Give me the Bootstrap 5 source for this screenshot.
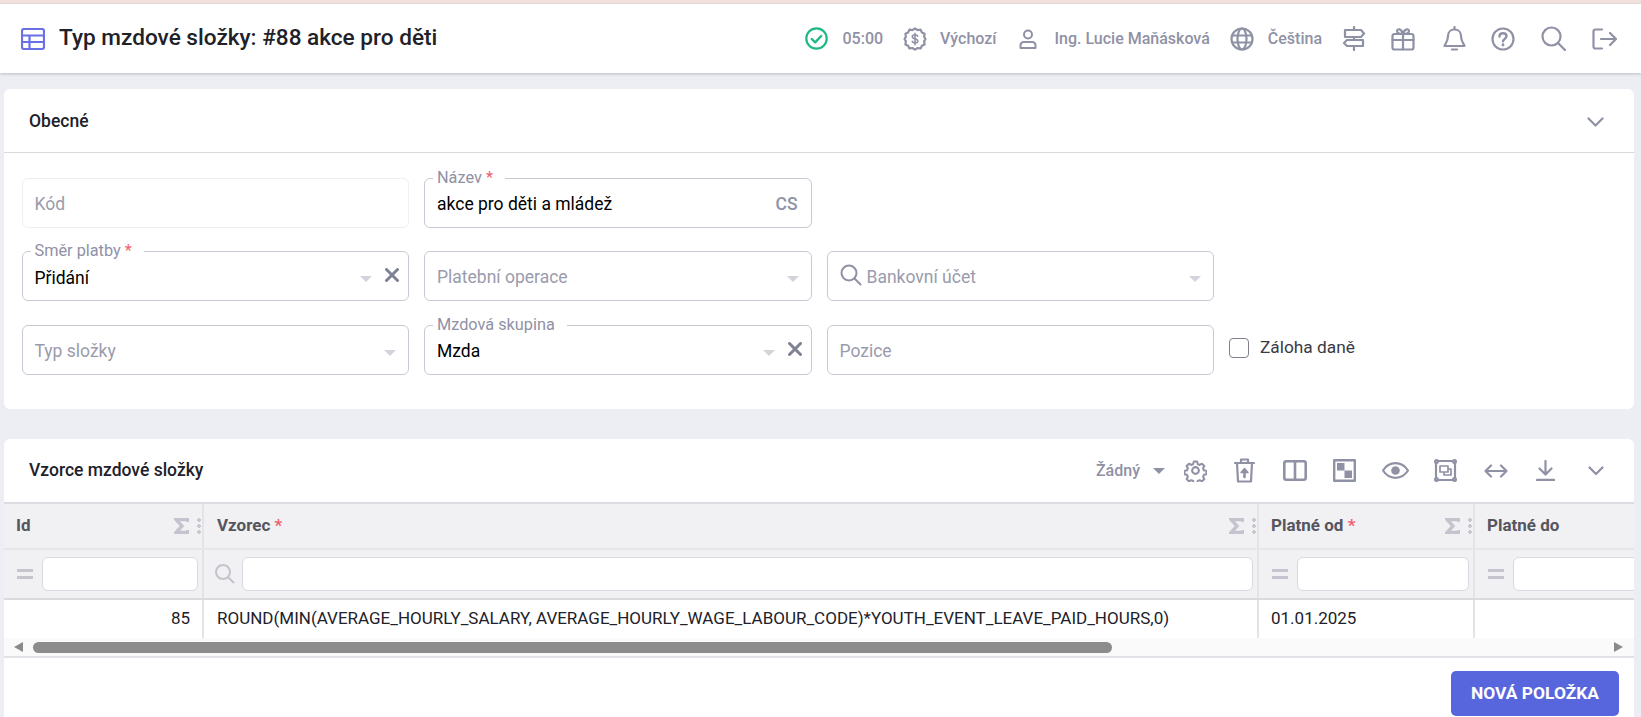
<!DOCTYPE html>
<html lang="cs">
<head>
<meta charset="utf-8">
<title>Typ mzdové složky</title>
<link href="https://cdn.jsdelivr.net/npm/bootstrap@5.3.0/dist/css/bootstrap.min.css" rel="stylesheet">
<style>
html,body{height:717px;overflow:hidden}
body{background:#eceef4;font-family:Roboto,sans-serif;color:#212129;font-size:16px}
.top-strip{height:4px;background:#f3e1df}
.app-bar{height:69px;background:#fff;box-shadow:0 1px 3px rgba(70,70,100,.3);padding:0 24px 0 21px}
.app-title{font-size:22.6px;font-weight:500;margin:0 0 0 14px;color:#212129;line-height:1}
.ic{fill:none;stroke:#8f91a5;stroke-width:2;stroke-linecap:round;stroke-linejoin:round;display:block;flex:none}
.bar-text{font-size:16px;font-weight:500;color:#8f91a5;white-space:nowrap}
.gap-13{margin-left:13px}.gap-14{margin-left:14px}.gap-17{margin-left:17px}.gap-20{margin-left:20px}
.gap-23{margin-left:23px}.gap-25{margin-left:25px}.gap-26{margin-left:26px}
.gap-27{margin-left:27px}.gap-28{margin-left:28px}
.sheet{margin:16px 7px 0 4px;background:#fff;border-radius:6px}
.sheet-one{height:320px}
.sheet-two{margin-top:30px;height:290px;border-radius:6px 6px 0 0;overflow:hidden}
.sheet-head{height:64px;border-bottom:1px solid #d9d9e0;padding:2px 30px 0 25px}
.sheet-two .sheet-head{height:63px;border-bottom:0;padding-top:0}
.sheet-title{font-size:17.5px;font-weight:500;color:#212129}
.fields{--bs-gutter-x:15px;--bs-gutter-y:23.5px;margin:1px 10px 0 10px}
.field{height:50px}
.field-input{height:100%;border:1px solid #c9c9d4;border-radius:6px;font-size:17.5px;color:#000;padding:3px 12px 0;box-shadow:none!important}
.field-input.plain{padding-top:2px}
.field-input::placeholder{color:#9a9bac}
.field-input.soft{border-color:#efeff3}
.field-input.with-search{padding-left:39px}
.float-label{position:absolute;left:9px;top:-9px;background:#fff;padding:0 12px 0 4px;font-size:16.3px;line-height:18px;color:#8f91a5}
.req{color:#f0606e}
.drop-caret{position:absolute;top:25px;width:0;height:0;border-left:6px solid transparent;border-right:6px solid transparent;border-top:6px solid #d3d3dc}
.caret-far{right:37px}
.caret-near{right:13px}
.clear-x{position:absolute;right:10px;top:17px;stroke:#7f8194;stroke-width:3}
.lang-tag{position:absolute;right:14px;top:16px;font-size:17.5px;line-height:20px;font-weight:500;color:#8f91a5}
.lead-search{position:absolute;left:13px;top:13px}
.tax-wrap{height:50px;padding:0 0 3px 0}
.tax-check{width:20px;height:20px;margin:0 11px 0 0!important;float:none!important;border:1.5px solid #80808c;border-radius:3px;flex:none}
.tax-label{font-size:17.3px;color:#3a3a44}
.grid-wrap{overflow:hidden;height:136px;border-top:2px solid #dcdce2}
.grid-table{table-layout:fixed;width:1690px;margin:0;--bs-table-border-color:#e3e3e8}
.grid-table th,.grid-table td{border-right:2px solid #e3e3e8;border-bottom:0;padding:0;vertical-align:middle}
.head-row th{height:45px;background:#f1f1f4;font-size:17px;font-weight:700;color:#55555f;padding:0 1px 0 12px;border-bottom:2px solid #e6e6ea}
.filter-row th{height:50px;background:#f1f1f4;padding:0 4px 0 13px;border-bottom:2px solid #d9d9de}
.data-row td{height:39px;font-size:17px;color:#212129;padding:0 12px;white-space:nowrap}
.grid-table .head-row .wide-col,.grid-table .data-row .wide-col{padding-left:13px}
.filter-box{height:34px;border:1px solid #d9d9e0;border-radius:6px;background:#fff;flex:1;min-width:0}
.gr{fill:none;stroke:#c3c4ce;stroke-width:3;flex:none}
.sum-mark{stroke-width:3.4}
.filter-lead{gap:9px}
.filter-search{gap:7px;margin-left:-2px}
.search-mark{stroke-width:2}
.kebab{width:4px;height:18px;margin-left:8px;flex:none;background:radial-gradient(circle,#c8c8d0 1.8px,transparent 2px) 0 0/4px 6px repeat-y}
.scroll-track{height:20px;background:#fafafa;border-bottom:2px solid #e1e1e6;padding:0 11px 0 10px}
.arrow-l{width:0;height:0;border-top:5.5px solid transparent;border-bottom:5.5px solid transparent;border-right:9px solid #8a8a8a}
.arrow-r{width:0;height:0;border-top:5.5px solid transparent;border-bottom:5.5px solid transparent;border-left:9px solid #8a8a8a}
.thumb{width:1079px;height:11px;background:#8c8c8c;border-radius:6px;margin-left:10px}
.foot{padding:13px 15px 0 0}
.new-btn{background:#5866dd;border:0;border-radius:5px;width:168px;height:45px;color:#fff;font-size:17.4px;font-weight:700;padding:0}
.none-pick{font-size:16px;font-weight:500;color:#8f91a5}
.none-caret{width:0;height:0;border-left:6px solid transparent;border-right:6px solid transparent;border-top:6px solid #8f91a5;margin:0 19px 0 13px}
.head-chevron{margin-left:33px}
</style>
</head>
<body>
<div class="top-strip"></div>
<header class="app-bar d-flex align-items-center">
  <svg class="ic" style="stroke:#6a70e6" width="24" height="22" viewBox="0 0 24 22"><rect x="1" y="1" width="22" height="20" rx="2" stroke-width="2.200"/><path d="M1 7.500h22M1 14h22M8.500 7.500V21" stroke-width="2.200"/></svg>
  <h1 class="app-title">Typ mzdové složky: #88 akce pro děti</h1>
  <div class="d-flex align-items-center ms-auto">
    <svg class="ic" style="stroke:#1fb985" width="23" height="23" viewBox="0 0 23 23"><circle cx="11.500" cy="11.500" r="10.200" stroke-width="2.200"/><path d="M6.800 12l3.400 3.300 6-6.300" stroke-width="2.400"/></svg>
    <span class="bar-text gap-14">05:00</span>
    <svg class="ic gap-20" width="24" height="24" viewBox="0 0 24 24"><path d="M12 1.500l2.600 1.600 3-.4 1.300 2.700 2.700 1.400-.5 3 1.400 2.200-1.400 2.400.5 3-2.700 1.300-1.300 2.700-3-.4-2.600 1.600-2.600-1.600-3 .4-1.300-2.700-2.700-1.300.5-3L1.500 12l1.400-2.200-.5-3 2.700-1.400 1.300-2.700 3 .4z" stroke-width="2.200"/><path d="M14.700 9.200c-.4-1-1.400-1.500-2.700-1.500-1.500 0-2.700.8-2.700 2 0 2.800 5.500 1.500 5.500 4.300 0 1.200-1.200 2-2.800 2-1.300 0-2.400-.6-2.800-1.600M12 6.200v11.600" stroke-width="1.600"/></svg>
    <span class="bar-text gap-13">Výchozí</span>
    <svg class="ic gap-23" width="18" height="20" viewBox="0 0 18 20"><circle cx="9" cy="5.500" r="4"/><path d="M1.500 19v-2.500c0-2 1.500-3.500 3.500-3.500h8c2 0 3.500 1.500 3.500 3.500V19z"/></svg>
    <span class="bar-text gap-17">Ing. Lucie Maňásková</span>
    <svg class="ic gap-20" width="24" height="24" viewBox="0 0 24 24"><circle cx="12" cy="12" r="10.500" stroke-width="2.200"/><ellipse cx="12" cy="12" rx="4.500" ry="10.500" stroke-width="2.200"/><path d="M2 8.500h20M2 15.500h20" stroke-width="2.200"/></svg>
    <span class="bar-text gap-14">Čeština</span>
    <svg class="ic gap-20" width="24" height="25" viewBox="0 0 24 25"><path d="M12 1v3M12 11v3M12 20v4M3 4h16l3 3.500-3 3.500H3zM21 14H5l-3 3 3 3h16z" stroke-width="2.200"/></svg>
    <svg class="ic gap-25" width="24" height="24" viewBox="0 0 24 24"><rect x="1.500" y="7" width="21" height="15.500" rx="2" stroke-width="2.200"/><path d="M1.500 13h21M12 7v15.500M12 7C9 7 6 6.500 6 4s4.500-3 6 3c1.500-6 6-5.500 6-3s-3 3-6 3z" stroke-width="2.200"/></svg>
    <svg class="ic gap-28" width="23" height="25" viewBox="0 0 23 25"><path d="M11.500 1v2.500M11.500 3.500c-4 0-6.500 3-6.500 6.500 0 6-3.500 8.500-3.500 10h20c0-1.500-3.500-4-3.500-10 0-3.500-2.500-6.500-6.500-6.500zM9 23.500h5" stroke-width="2.200"/></svg>
    <svg class="ic gap-25" width="24" height="24" viewBox="0 0 24 24"><circle cx="12" cy="12" r="10.500" stroke-width="2.200"/><path d="M8.500 9.500c0-2 1.600-3.200 3.500-3.200s3.500 1.200 3.500 3c0 2.500-3.500 2.700-3.500 5" stroke-width="2.400"/><path d="M12 17.700v.3" stroke-width="2.800"/></svg>
    <svg class="ic gap-26" width="25" height="25" viewBox="0 0 25 25"><circle cx="10.500" cy="10.500" r="9" stroke-width="2.200"/><path d="M17 17l7 7" stroke-width="2.200"/></svg>
    <svg class="ic gap-26" width="25" height="22" viewBox="0 0 25 22"><path d="M10 1.500H3.500c-1.200 0-2 .8-2 2v15c0 1.200.8 2 2 2H10M9 11h15M18 5l6 6-6 6" stroke-width="2.200"/></svg>
  </div>
</header>

<section class="sheet sheet-one">
  <div class="sheet-head d-flex align-items-center justify-content-between">
    <span class="sheet-title">Obecné</span>
    <svg class="ic" width="17" height="10" viewBox="0 0 17 10"><path d="M1.500 1.500l7 7 7-7" stroke-width="2.200"/></svg>
  </div>
  <div class="row fields">
    <div class="col-3"><div class="field position-relative"><input class="form-control field-input plain soft" placeholder="Kód"></div></div>
    <div class="col-3"><div class="field position-relative"><input class="form-control field-input" value="akce pro děti a mládež"><span class="float-label">Název <span class="req">*</span></span><span class="lang-tag">CS</span></div></div>
    <div class="col-6"></div>

    <div class="col-3"><div class="field position-relative"><input class="form-control field-input" value="Přidání"><span class="float-label">Směr platby <span class="req">*</span></span><span class="drop-caret caret-far"></span><svg class="ic clear-x" width="14" height="14" viewBox="0 0 14 14"><path d="M1.500 1.500l11 11M12.500 1.500l-11 11"/></svg></div></div>
    <div class="col-3"><div class="field position-relative"><input class="form-control field-input plain" placeholder="Platební operace"><span class="drop-caret caret-near"></span></div></div>
    <div class="col-3"><div class="field position-relative"><input class="form-control field-input plain with-search" placeholder="Bankovní účet"><svg class="ic lead-search" width="22" height="22" viewBox="0 0 22 22"><circle cx="9" cy="9" r="7.500"/><path d="M14.500 14.500l6 6"/></svg><span class="drop-caret caret-near"></span></div></div>
    <div class="col-3"></div>

    <div class="col-3"><div class="field position-relative"><input class="form-control field-input plain" placeholder="Typ složky"><span class="drop-caret caret-near"></span></div></div>
    <div class="col-3"><div class="field position-relative"><input class="form-control field-input" value="Mzda"><span class="float-label">Mzdová skupina</span><span class="drop-caret caret-far"></span><svg class="ic clear-x" width="14" height="14" viewBox="0 0 14 14"><path d="M1.500 1.500l11 11M12.500 1.500l-11 11"/></svg></div></div>
    <div class="col-3"><div class="field position-relative"><input class="form-control field-input plain" placeholder="Pozice"></div></div>
    <div class="col-3"><div class="tax-wrap d-flex align-items-center"><input class="form-check-input tax-check" type="checkbox" id="zaloha"><label class="tax-label" for="zaloha">Záloha daně</label></div></div>
  </div>
</section>

<section class="sheet sheet-two">
  <div class="sheet-head d-flex align-items-center">
    <span class="sheet-title">Vzorce mzdové složky</span>
    <div class="d-flex align-items-center ms-auto">
      <span class="none-pick">Žádný</span><span class="none-caret"></span>
      <svg class="ic" width="23" height="23" viewBox="0 0 24 24"><path d="M10 1.500h4l.7 3 2.300 1 2.700-1.500 2.800 2.800-1.500 2.700 1 2.300 3 .7v4l-3 .7-1 2.300 1.500 2.700-2.800 2.800-2.700-1.500-2.300 1-.7 3h-4l-.7-3-2.300-1-2.700 1.500-2.800-2.800 1.500-2.700-1-2.300-3-.7v-4l3-.7 1-2.300-1.500-2.700 2.800-2.800 2.700 1.500 2.300-1z" transform="translate(1.400 1.400) scale(.88)" stroke-width="2.400"/><circle cx="12" cy="12" r="3.500" stroke-width="2.200"/></svg>
      <svg class="ic gap-27" width="21" height="25" viewBox="0 0 21 25"><path d="M1 5h19M7 5V1.500h7V5M3 5l1 18.500h13L18 5" stroke-width="2.200"/><path d="M10.500 19v-7" stroke-width="2.600"/><path d="M7 14.500l3.500-4 3.500 4z" fill="#8f91a5" stroke-width="1.400"/></svg>
      <svg class="ic gap-28" width="24" height="21" viewBox="0 0 24 21"><rect x="1.300" y="1.300" width="21.400" height="18.400" rx="2" stroke-width="2.600"/><path d="M12 1v19" stroke-width="2.600"/></svg>
      <svg class="ic gap-26" width="23" height="23" viewBox="0 0 23 23"><rect x="1.200" y="1.200" width="20.600" height="20.600" stroke-width="2.400"/><path d="M4 4h7.500v7.500H4zM11.500 11.500H19V19h-7.500z" fill="#8f91a5" stroke="none"/></svg>
      <svg class="ic gap-26" width="27" height="17" viewBox="0 0 27 17"><path d="M1 8.500C4 3.800 8.500 1.200 13.500 1.200s9.500 2.600 12.500 7.300c-3 4.700-7.500 7.300-12.500 7.300S4 13.200 1 8.500z" stroke-width="2.200"/><circle cx="13.500" cy="8.500" r="4.300" fill="#8f91a5" stroke="none"/></svg>
      <svg class="ic gap-25" width="23" height="23" viewBox="0 0 23 23"><path d="M3.500 2h16M21 3.500v16M19.500 21h-16M2 19.500v-16" stroke-width="2.200"/><circle cx="2.500" cy="2.500" r="1.500"/><circle cx="20.500" cy="2.500" r="1.500"/><circle cx="2.500" cy="20.500" r="1.500"/><circle cx="20.500" cy="20.500" r="1.500"/><path d="M6 7h8v6H6zM10 13v3h7v-6h-3" stroke-width="1.700"/></svg>
      <svg class="ic gap-27" width="24" height="14" viewBox="0 0 24 14"><path d="M1.500 7h21M7 1.500L1.500 7 7 12.500M17 1.500L22.500 7 17 12.500" stroke-width="2.200"/></svg>
      <svg class="ic gap-28" width="19" height="21" viewBox="0 0 19 21"><path d="M9.500 1v13M3.500 8.500l6 6 6-6" stroke-width="2.200"/><path d="M1 20h17" stroke-width="2.400"/></svg>
      <svg class="ic head-chevron" width="16" height="10" viewBox="0 0 16 10"><path d="M1.500 1.500L8 8l6.500-6.500" stroke-width="2.200"/></svg>
    </div>
  </div>
  <div class="grid-wrap">
    <table class="table grid-table">
      <colgroup><col style="width:199px"><col style="width:1055px"><col style="width:216px"><col style="width:220px"></colgroup>
      <thead>
        <tr class="head-row">
          <th><div class="d-flex align-items-center justify-content-between"><span>Id</span><span class="d-flex align-items-center"><svg class="gr sum-mark" width="15" height="16" viewBox="0 0 15 16"><path d="M14 4V1.500H2L8 8l-6 6.500h12V12"/></svg><span class="kebab"></span></span></div></th>
          <th class="wide-col"><div class="d-flex align-items-center justify-content-between"><span>Vzorec <span class="req">*</span></span><span class="d-flex align-items-center"><svg class="gr sum-mark" width="15" height="16" viewBox="0 0 15 16"><path d="M14 4V1.500H2L8 8l-6 6.500h12V12"/></svg><span class="kebab"></span></span></div></th>
          <th><div class="d-flex align-items-center justify-content-between"><span>Platné od <span class="req">*</span></span><span class="d-flex align-items-center"><svg class="gr sum-mark" width="15" height="16" viewBox="0 0 15 16"><path d="M14 4V1.500H2L8 8l-6 6.500h12V12"/></svg><span class="kebab"></span></span></div></th>
          <th><span>Platné do</span></th>
        </tr>
        <tr class="filter-row">
          <th><div class="d-flex align-items-center filter-lead"><svg class="gr" width="16" height="10" viewBox="0 0 16 10"><path d="M0 1.500h16M0 8.500h16"/></svg><div class="filter-box"></div></div></th>
          <th><div class="d-flex align-items-center filter-search"><svg class="gr search-mark" width="20" height="20" viewBox="0 0 20 20"><circle cx="8" cy="8" r="7"/><path d="M13 13l6 6"/></svg><div class="filter-box"></div></div></th>
          <th><div class="d-flex align-items-center filter-lead"><svg class="gr" width="16" height="10" viewBox="0 0 16 10"><path d="M0 1.500h16M0 8.500h16"/></svg><div class="filter-box"></div></div></th>
          <th><div class="d-flex align-items-center filter-lead"><svg class="gr" width="16" height="10" viewBox="0 0 16 10"><path d="M0 1.500h16M0 8.500h16"/></svg><div class="filter-box"></div></div></th>
        </tr>
      </thead>
      <tbody>
        <tr class="data-row">
          <td class="text-end">85</td>
          <td class="wide-col">ROUND(MIN(AVERAGE_HOURLY_SALARY, AVERAGE_HOURLY_WAGE_LABOUR_CODE)*YOUTH_EVENT_LEAVE_PAID_HOURS,0)</td>
          <td>01.01.2025</td>
          <td></td>
        </tr>
      </tbody>
    </table>
  </div>
  <div class="scroll-track d-flex align-items-center">
    <span class="arrow-l"></span><span class="thumb"></span><span class="arrow-r ms-auto"></span>
  </div>
  <div class="foot d-flex justify-content-end">
    <button type="button" class="btn new-btn">NOVÁ POLOŽKA</button>
  </div>
</section>
<script src="https://cdn.jsdelivr.net/npm/bootstrap@5.3.0/dist/js/bootstrap.bundle.min.js"></script>
</body>
</html>
